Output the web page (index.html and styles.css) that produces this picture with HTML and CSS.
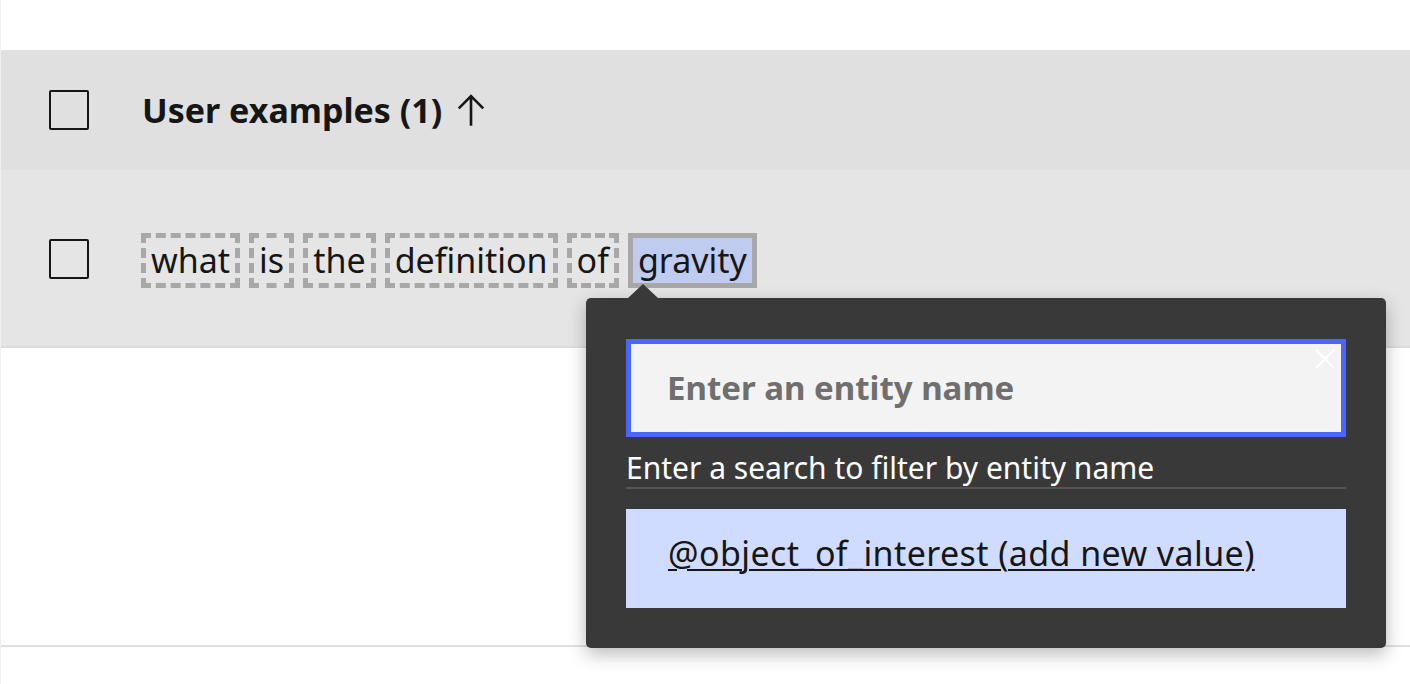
FILE: index.html
```html
<!DOCTYPE html>
<html lang="en">
<head>
<meta charset="utf-8">
<title>User examples</title>
<link rel="stylesheet" href="styles.css">
</head>
<body>
<div class="page">
  <div class="table">
    <div class="row head">
      <span class="checkbox"></span>
      <span class="title">User examples (1)</span>
      <svg class="sort" viewBox="0 0 32 32" width="42" height="42" aria-hidden="true"><path d="M16 4L6 14l1.41 1.41L15 7.83V28h2V7.83l7.59 7.58L26 14 16 4z" fill="#161616"/></svg>
    </div>
    <div class="row data">
      <span class="checkbox"></span>
      <div class="tokens">
        <span class="token">what</span>
        <span class="token">is</span>
        <span class="token">the</span>
        <span class="token">definition</span>
        <span class="token">of</span>
        <span class="token selected">gravity</span>
      </div>
    </div>
    <div class="empty"></div>
  </div>

  <div class="popover">
    <div class="search">
      <span class="placeholder">Enter an entity name</span>
      <svg class="close" viewBox="0 0 20 20" width="20" height="20" aria-hidden="true"><path d="M1 1L19 19M19 1L1 19" stroke="#ffffff" stroke-width="2"/></svg>
    </div>
    <div class="helper">Enter a search to filter by entity name</div>
    <div class="option"><span class="option-link">@object_of_interest (add new value)</span></div>
  </div>
</div>
</body>
</html>
```

FILE: styles.css
```css
html, body {
  margin: 0;
  padding: 0;
  background: #ffffff;
}

body {
  font-family: "Noto Sans", Roboto, "Liberation Sans", sans-serif;
  color: #161616;
  overflow: hidden;
}

.page {
  position: relative;
  width: 1410px;
  height: 684px;
  border-left: 1px solid #f0f0f0;
  box-sizing: border-box;
}

.table {
  padding-top: 50px;
}

.row {
  display: flex;
  align-items: center;
  padding-left: 48px;
}

.head {
  height: 120px;
  background: #e0e0e0;
}

.data {
  height: 176px;
  background: #e5e5e5;
  border-bottom: 2px solid #dcdcdc;
}

.checkbox {
  width: 40px;
  height: 40px;
  box-sizing: border-box;
  border: 2px solid #161616;
  border-radius: 2px;
  flex: none;
}

.data .checkbox {
  margin-top: 2px;
}

.title {
  margin-left: 53px;
  font-size: 34px;
  line-height: 46px;
  font-weight: 700;
  color: #161616;
}

.sort {
  margin-left: 8px;
}

.tokens {
  display: flex;
  gap: 9px;
  margin-left: 52px;
  margin-top: 5px;
}

.token {
  height: 55px;
  box-sizing: border-box;
  border: 5px dashed #a8a8a8;
  padding: 0 5px;
  font-size: 34px;
  line-height: 45px;
  color: #161616;
}

.token.selected {
  border: 5px solid #a8a8a8;
  background: #bfcbef;
}

.empty {
  height: 297px;
  border-bottom: 2px solid #e0e0e0;
}

.popover {
  position: absolute;
  left: 585px;
  top: 298px;
  width: 800px;
  height: 350px;
  box-sizing: border-box;
  padding: 41px 40px 40px 40px;
  background: #393939;
  border-radius: 5px;
  box-shadow: 0 6px 18px rgba(0, 0, 0, 0.28);
}

.popover::before {
  content: "";
  position: absolute;
  left: 42px;
  top: -14px;
  border-left: 15px solid transparent;
  border-right: 15px solid transparent;
  border-bottom: 14px solid #393939;
}

.search {
  position: relative;
  height: 98px;
  box-sizing: border-box;
  border: 5px solid #4a66ff;
  background: #f3f3f3;
  display: flex;
  align-items: center;
  padding-left: 36px;
}

.placeholder {
  font-size: 33px;
  line-height: 46px;
  font-weight: 700;
  color: #6f6f6f;
}

.close {
  position: absolute;
  right: 6px;
  top: 5px;
}

.helper {
  height: 52px;
  box-sizing: border-box;
  border-bottom: 2px solid #555555;
  display: flex;
  align-items: flex-end;
  padding-bottom: 1px;
  font-size: 30px;
  line-height: 36px;
  color: #ffffff;
}

.option {
  margin-top: 20px;
  height: 99px;
  background: #d0dcff;
  display: flex;
  align-items: center;
  padding-left: 42px;
}

.option-link {
  font-size: 34px;
  line-height: 46px;
  letter-spacing: 0.4px;
  color: #161616;
  text-decoration: underline;
  text-decoration-thickness: 2px;
  text-underline-offset: 3px;
  margin-top: -12px;
}
```
